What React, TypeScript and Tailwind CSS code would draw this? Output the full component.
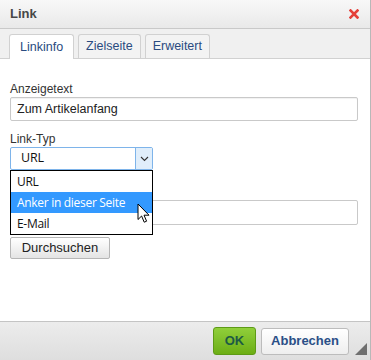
import React from "react";

const tabs = ["Linkinfo", "Zielseite", "Erweitert"];
const options = ["URL", "Anker in dieser Seite", "E-Mail"];

function Cursor() {
  return (
    <svg width="14" height="22" viewBox="0 0 14 22" className="absolute left-[126px] top-[32px]">
      <path
        d="M1 1 L1 16.5 L4.6 13 L7.2 19.2 L9.6 18.2 L7 12.2 L12 12.2 Z"
        fill="#ffffff"
        stroke="#000000"
        strokeWidth="1"
      />
    </svg>
  );
}

export default function App() {
  const ui = { fontFamily: '"Liberation Sans", Arial, sans-serif' };
  const sel = { fontFamily: '"Open Sans", "Noto Sans", sans-serif' };

  return (
    <div className="w-[371px] h-[360px] overflow-hidden flex flex-col bg-white border-r border-[#b8b8b8]" style={ui}>
      {/* title */}
      <div className="h-[29px] shrink-0 flex items-center justify-between pl-[10px] pr-[11px] bg-gradient-to-b from-[#f8f8f8] to-[#e9e9e9] border-b border-[#c9c9c9]">
        <span className="text-[13px] font-bold text-[#474747]">Link</span>
        <svg width="10" height="10" viewBox="0 0 10 10">
          <path d="M1.5 1.5 L8.5 8.5 M8.5 1.5 L1.5 8.5" stroke="#e4403a" strokeWidth="2.6" strokeLinecap="square" />
        </svg>
      </div>

      {/* tabs */}
      <div className="h-[30px] shrink-0 flex items-end gap-[4px] pl-[9px] bg-[#f0f0f0] border-b border-[#d1d1d1]">
        {tabs.map((t, i) =>
          i === 0 ? (
            <div
              key={t}
              className="h-[25px] -mb-px px-[10px] flex items-center bg-white border border-b-0 border-[#d1d1d1] rounded-t-[3px] text-[12.5px] text-[#2a4b80]"
            >
              {t}
            </div>
          ) : (
            <div
              key={t}
              className="h-[24px] px-[7px] flex items-center bg-[#f3f3f3] border border-b-0 border-[#d1d1d1] rounded-t-[3px] text-[12.5px] text-[#2a4b80]"
            >
              {t}
            </div>
          )
        )}
      </div>

      {/* content */}
      <div className="flex-1 pt-[23px] pl-[10px] pr-[12px] flex flex-col">
        <label className="text-[12px] leading-[14px] text-[#333] mb-px">Anzeigetext</label>
        <div className="h-[24px] border border-[#c9c9c9] rounded-[2px] flex items-center px-[6px] text-[12.5px] text-[#222] shadow-[inset_0_1px_1px_rgba(0,0,0,0.06)]">
          Zum Artikelanfang
        </div>

        <label className="text-[12px] leading-[14px] text-[#333] mt-[11px] mb-px">Link-Typ</label>
        <div className="relative w-[143px] z-10">
          <div className="h-[23px] border border-[#7eb4ea] rounded-[2px] flex items-center bg-white">
            <span className="flex-1 pl-[10px] text-[12.5px] tracking-[-0.2px] text-[#111]" style={sel}>
              URL
            </span>
            <div className="w-[17px] h-full bg-[#e0eefb] border-l border-[#7eb4ea] flex items-center justify-center">
              <svg width="9" height="6" viewBox="0 0 9 6">
                <path d="M1 1 L4.5 4.5 L8 1" fill="none" stroke="#333" strokeWidth="1.1" />
              </svg>
            </div>
          </div>
          <div className="absolute left-0 top-[23px] w-[143px] border border-black bg-white flex flex-col" style={sel}>
            {options.map((o, i) => (
              <div
                key={o}
                className={
                  i === 1
                    ? "h-[21px] flex items-center pl-[6px] text-[12px] tracking-[-0.3px] bg-[#3399ff] text-white"
                    : "h-[21px] flex items-center pl-[6px] text-[12px] tracking-[-0.3px] text-[#111]"
                }
              >
                {o}
              </div>
            ))}
            <Cursor />
          </div>
        </div>

        <div className="h-[30px] shrink-0" />
        <div className="h-[25px] border border-[#c9c9c9] rounded-[2px]" />

        <div className="mt-[10px]">
          <button
            className="h-[22px] w-[100px] border border-[#b6b6b6] rounded-[2px] bg-gradient-to-b from-[#ffffff] to-[#e4e4e4] text-[13px] text-[#222]"
            style={ui}
          >
            Durchsuchen
          </button>
        </div>
      </div>

      {/* footer */}
      <div className="h-[39px] shrink-0 relative flex items-center justify-end gap-[5px] pr-[21px] bg-gradient-to-b from-[#ececec] to-[#dedede] border-t border-[#c4c4c4]">
        <button
          className="h-[28px] w-[43px] rounded-[3px] border border-[#5d9a16] bg-gradient-to-b from-[#90cf3a] to-[#6cae13] text-[13px] font-bold text-[#1d5a45]"
          style={ui}
        >
          OK
        </button>
        <button
          className="h-[27px] w-[88px] rounded-[3px] border border-[#bcbcbc] bg-gradient-to-b from-[#ffffff] to-[#eeeeee] text-[13px] font-bold text-[#2b4f87]"
          style={ui}
        >
          Abbrechen
        </button>
        <svg width="12" height="12" viewBox="0 0 12 12" className="absolute right-[3px] bottom-[5px]">
          <path d="M12 0 L12 12 L0 12 Z" fill="#6f6f6f" />
        </svg>
      </div>
    </div>
  );
}
